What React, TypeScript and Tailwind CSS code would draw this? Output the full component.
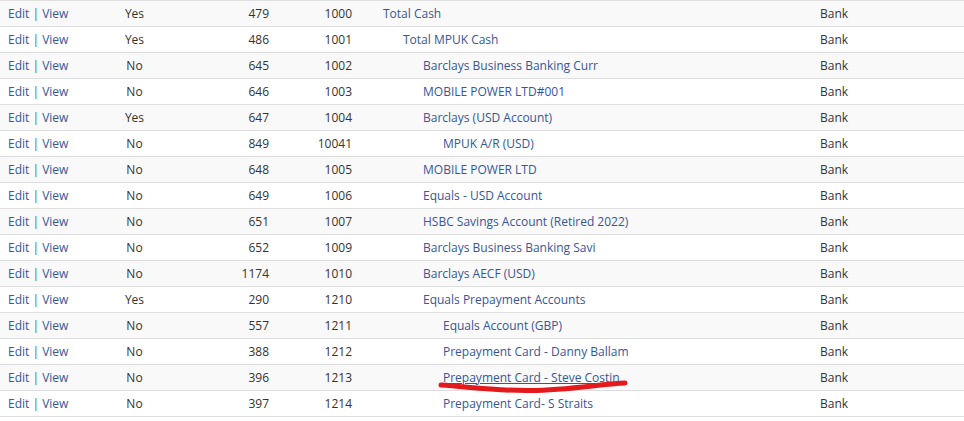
const rows = [
  { active: 'Yes', id: 479, code: '1000', name: 'Total Cash', level: 0 },
  { active: 'Yes', id: 486, code: '1001', name: 'Total MPUK Cash', level: 1 },
  { active: 'No', id: 645, code: '1002', name: 'Barclays Business Banking Curr', level: 2 },
  { active: 'No', id: 646, code: '1003', name: 'MOBILE POWER LTD#001', level: 2 },
  { active: 'Yes', id: 647, code: '1004', name: 'Barclays (USD Account)', level: 2 },
  { active: 'No', id: 849, code: '10041', name: 'MPUK A/R (USD)', level: 3 },
  { active: 'No', id: 648, code: '1005', name: 'MOBILE POWER LTD', level: 2 },
  { active: 'No', id: 649, code: '1006', name: 'Equals - USD Account', level: 2 },
  { active: 'No', id: 651, code: '1007', name: 'HSBC Savings Account (Retired 2022)', level: 2 },
  { active: 'No', id: 652, code: '1009', name: 'Barclays Business Banking Savi', level: 2 },
  { active: 'No', id: 1174, code: '1010', name: 'Barclays AECF (USD)', level: 2 },
  { active: 'Yes', id: 290, code: '1210', name: 'Equals Prepayment Accounts', level: 2 },
  { active: 'No', id: 557, code: '1211', name: 'Equals Account (GBP)', level: 3 },
  { active: 'No', id: 388, code: '1212', name: 'Prepayment Card - Danny Ballam', level: 3 },
  { active: 'No', id: 396, code: '1213', name: 'Prepayment Card - Steve Costin', level: 3, hover: true },
  { active: 'No', id: 397, code: '1214', name: 'Prepayment Card- S Straits', level: 3 },
];

const indent = ['pl-[23px]', 'pl-[43px]', 'pl-[63px]', 'pl-[83px]'];

export default function App() {
  return (
    <div
      className="relative w-[964px] h-[421px] bg-white text-[12px] text-[#333] overflow-hidden"
      style={{ fontFamily: '"Open Sans", "Liberation Sans", sans-serif' }}
    >
      <div className="border-t border-[#dddddd]">
        {rows.map((r, i) => (
          <div
            key={r.code}
            className={`flex items-center h-[26px] border-b border-[#dddddd] ${
              i % 2 === 0 ? 'bg-[#f9f9f9]' : 'bg-white'
            }`}
          >
            <div className="w-[100px] pl-2 text-[#35569a]">
              <span>Edit</span>
              <span className="text-[#3c6db5]"> | </span>
              <span>View</span>
            </div>
            <div className="w-[69px] text-center">{r.active}</div>
            <div className="w-[108px] pr-2 text-right">{r.id}</div>
            <div className="w-[83px] pr-2 text-right">{r.code}</div>
            <div className={`w-[452px] ${indent[r.level]} text-[#35569a]`}>
              <span className={r.hover ? 'underline' : ''}>{r.name}</span>
            </div>
            <div className="pl-2">Bank</div>
          </div>
        ))}
      </div>

      {/* red pen mark under the highlighted row */}
      <svg
        className="absolute left-0 top-0 pointer-events-none"
        width="964"
        height="421"
        viewBox="0 0 964 421"
      >
        <path
          d="M441 385 C 470 387, 500 391, 530 390.5 C 570 390, 600 384, 625 383"
          stroke="#e3191c"
          strokeWidth="5"
          strokeLinecap="round"
          fill="none"
        />
      </svg>
    </div>
  );
}
